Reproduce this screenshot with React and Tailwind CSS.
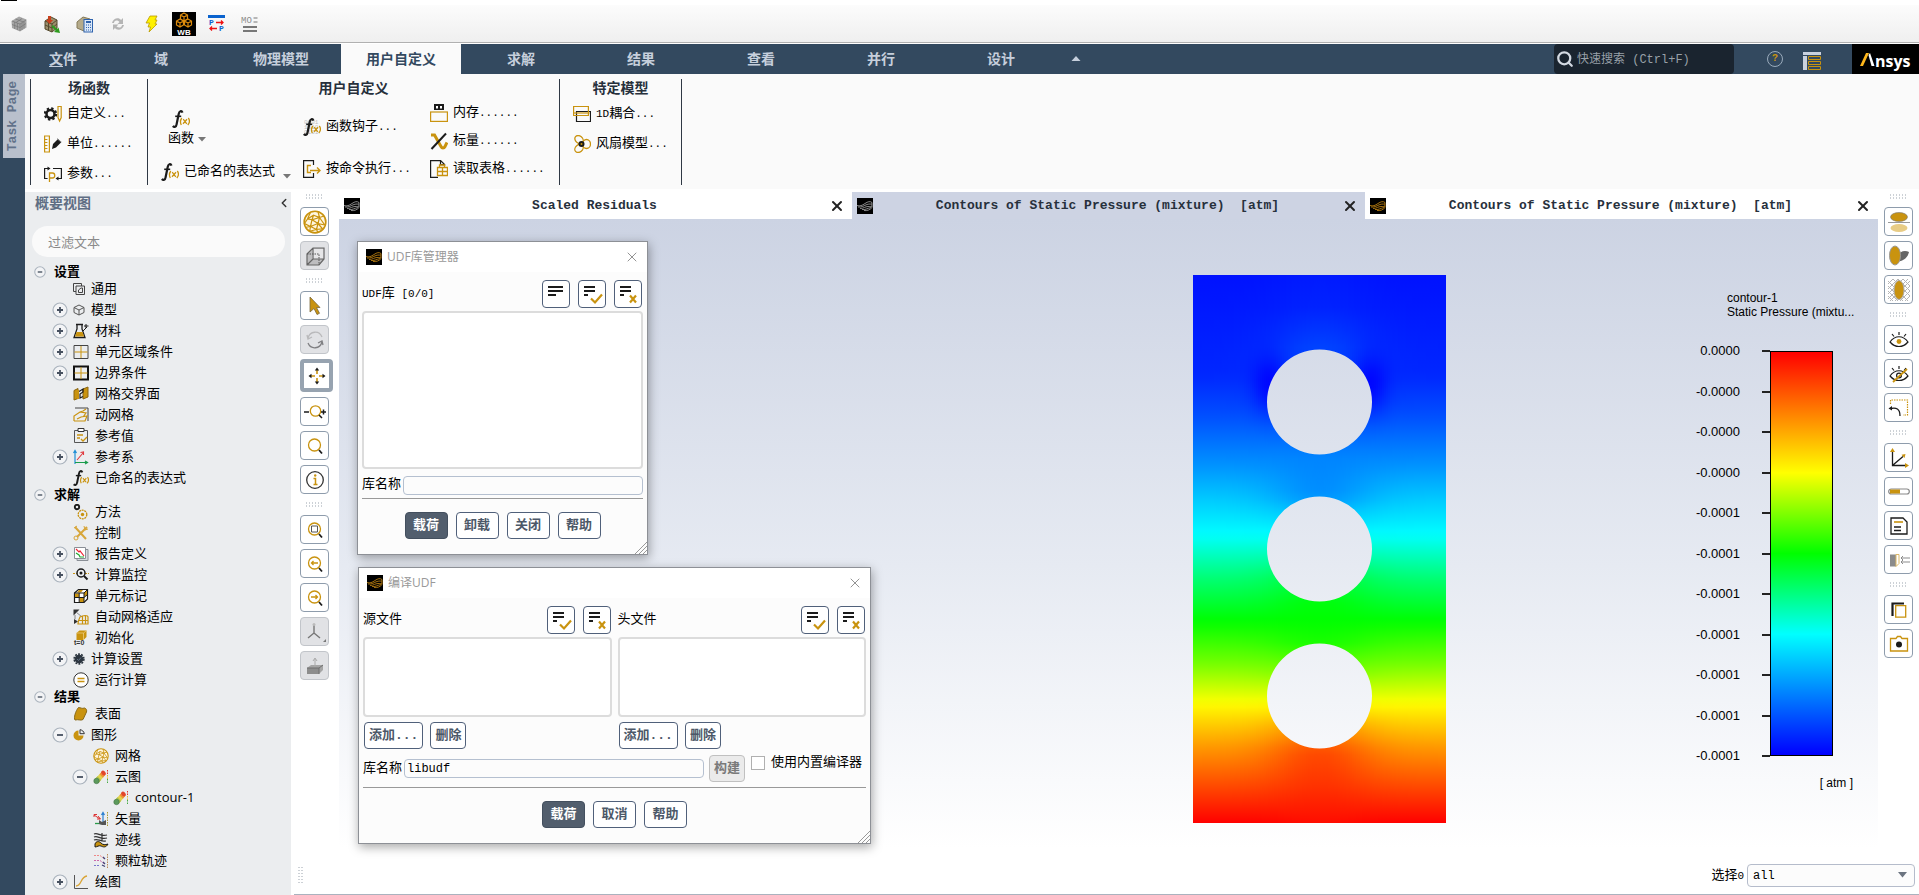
import { ChevronLeft, X, Search } from 'lucide-react';

const GOLD = '#c9930f';
const INK = '#1b1b1b';

// ─── Small helpers ────────────────────────────────────────────────────────────
// Latin runs sit at half the width of a Chinese character
function Mixed({ children }) {
  return children.split(/([\x20-\x7e]+)/).map((run, i) =>
    i % 2 ? <span key={i} className="text-[11px] whitespace-pre">{run}</span> : run
  );
}

function Svg({ size = 16, box = 16, children }) {
  return (
    <svg width={size} height={size} viewBox={`0 0 ${box} ${box}`} fill="none" className="shrink-0" aria-hidden="true">
      {children}
    </svg>
  );
}

const FxPaths = () => (
  <>
    <path d="M10.500 2.600C9.500.2 7.300.8 6.700 4L4.600 14.300C4.200 16.800 2.300 17.600.8 16" stroke={INK} strokeWidth="2.200" />
    <path d="M3.200 6.300h6" stroke={INK} strokeWidth="1.600" />
    <path d="M9.800 8c-1.500 2-1.500 5-.500 7M16.300 8c1.500 2 1.200 5-.500 7M11.200 9.200l3.600 4.600M15 9.200l-4 4.600" stroke={GOLD} strokeWidth="1.300" />
  </>
);

function Fx({ size = 18 }) {
  return <Svg size={size} box={18}><FxPaths /></Svg>;
}

function Swirl({ color, size = 16 }) {
  return (
    <Svg size={size}>
      <rect width="16" height="16" fill="#000" />
      <path
        d="M0 7.500c3 1 5 0 8-2s5-2.500 7-1M1 9c4 .5 6-1.500 9-2.500s4 0 5-.500M3 10.500c4 0 5-2 8-2s3 0 4-.500M5 11.500c3 .5 5-1 9-2M7 12.500c3 .5 6-.500 8-3M15 4.500v5"
        stroke={color}
        strokeWidth=".9"
      />
    </Svg>
  );
}

// ─── Toolbar icons ────────────────────────────────────────────────────────────
const TOOLBAR = [
  {
    label: '网格',
    icon: (
      <Svg>
        <path d="M.500 5L8 .5l7.500 3v8l-6.500 4-8-3.500z" fill="#a5a5a5" />
        <path d="M1 5l8 3 6-4M9 8v7M1 8.500l8 3 6-4M3.700 6v7M6.400 7v7M11 7v7M13 5.500v7M4.500 3l8 3M11 2.500L5 6.500" stroke="#757575" strokeWidth=".7" />
      </Svg>
    ),
  },
  {
    label: '读取',
    icon: (
      <Svg size={18} box={18}>
        <path d="M2 6l6-4 6 3v8l-5 4-7-3z" fill="#9c8f6c" stroke="#54492d" />
        <path d="M2 6l7 3 5-4M9 9v8M5.500 7.500v8M2 10l7 3 5-4" stroke="#54492d" />
        <path d="M5 1h3v4h2L6.500 9 3 5h2z" fill="#c8401c" />
        <path d="M10 10l4 4 1.500-1.500L17 18l-6-1 1.500-1.500-4-4z" fill="#2f9b1f" />
      </Svg>
    ),
  },
  {
    label: '计算',
    icon: (
      <Svg size={18} box={18}>
        <path d="M1 7l6-5 7 2v8l-6 4-7-3z" fill="#b5ab8b" stroke="#857a58" />
        <rect x="8" y="4.500" width="8.500" height="12.500" fill="#dbe8f8" stroke="#2f63ad" />
        <path d="M10 7h5" stroke="#2f63ad" strokeWidth="2" />
        <path d="M10 10h5M10 12.500h5M10 15h5" stroke="#2f63ad" strokeDasharray="1 1" />
      </Svg>
    ),
  },
  {
    label: '刷新',
    icon: (
      <Svg>
        <path d="M2 7c1-5 7-6 9-3l2-2v6H7.500l2-2C7 3.500 4 4.500 4 7zM14 9c-1 5-7 6-9 3l-2 2V8.500h5.500l-2 2C9 12.500 12 11.500 12 9z" fill="#b5b5b5" />
      </Svg>
    ),
  },
  {
    label: '执行',
    icon: (
      <Svg size={18} box={18}>
        <path d="M8 1h7l-2 4h2l-2 4h2L7 17l1.500-5H6l1.500-4H4z" fill="#fff100" stroke="#b99b00" strokeWidth=".8" />
      </Svg>
    ),
  },
  {
    label: 'Workbench',
    icon: (
      <Svg size={24} box={24}>
        <rect width="24" height="24" fill="#000" />
        <path
          d="M12 1l3.500 2v4L12 9 8.500 7V3zM8.500 3L12 5l3.500-2M12 5v4M8 7l3.500 2v4L8 15l-3.500-2V9zM4.500 9L8 11l3.500-2M8 11v4M16 7l3.500 2v4L16 15l-3.500-2V9zM12.500 9l3.500 2 3.500-2M16 11v4"
          stroke="#dd8b0c"
          strokeWidth="1.200"
        />
        <text x="12" y="22.500" textAnchor="middle" fill="#fff" fontSize="8" fontWeight="700" fontFamily="Liberation Sans">WB</text>
      </Svg>
    ),
  },
  {
    label: '参数',
    icon: (
      <Svg size={18} box={18}>
        <path d="M0 1.500h17" stroke="#0b63ce" strokeWidth="3" />
        <text x="1" y="10" fill="#0b63ce" fontSize="8" fontWeight="700" fontFamily="Liberation Mono">P</text>
        <text x="11" y="16" fill="#0b63ce" fontSize="8" fontWeight="700" fontFamily="Liberation Mono">P</text>
        <path d="M8 7.500h7M13 5.500l2 2-2 2M9 13.500H2M4 11.500l-2 2 2 2" stroke="#e11" strokeWidth="1.300" />
      </Svg>
    ),
  },
  {
    label: '监控',
    icon: (
      <Svg size={18} box={18}>
        <text x="0" y="8" fill="#8a8a8a" fontSize="9" fontFamily="Liberation Mono">MO</text>
        <path d="M12.500 3h4M12.500 7h4" stroke="#777" />
        <path d="M2 12h14M2 16h14" stroke="#777" strokeWidth="2" />
      </Svg>
    ),
  },
];

// ─── Ribbon icons ─────────────────────────────────────────────────────────────
const RIBBON = {
  custom: (
    <Svg size={18} box={18}>
      <circle cx="6.500" cy="9" r="4" stroke={INK} strokeWidth="2.500" />
      <circle cx="6.500" cy="9" r="5.600" stroke={INK} strokeWidth="2.200" strokeDasharray="2.300 2.100" />
      <path d="M14 1.500h3.200v11l-1.600 3.500-1.600-3.500z" stroke={GOLD} strokeWidth="1.200" />
    </Svg>
  ),
  units: (
    <Svg size={18} box={18}>
      <path d="M.6 1h4.800v16H.6zM.6 4.500h2.800M.6 7.500h2.800M.6 10.500h2.800M.6 13.500h2.800" stroke={GOLD} strokeWidth="1.200" />
      <path d="M8 14l1-5 5-5 3.500 3-5.500 5.500z" fill={INK} />
      <path d="M13 3.500l4 3.500" stroke="#888" />
    </Svg>
  ),
  params: (
    <Svg size={18} box={18}>
      <path d="M5 3.500H.6v10h3M9 3.500h8.400v10H13" stroke={INK} strokeWidth="1.200" />
      <path d="M3.500 1.500l3 2-3 2zM14.500 11.500l-3 2 3 2z" fill={INK} />
      <path d="M5.500 17V8H8.500c3 0 3 5 0 5h-3" stroke={GOLD} strokeWidth="1.300" />
    </Svg>
  ),
  hooks: (
    <Svg size={18} box={18}>
      <text x="1" y="6" fontSize="6" fill="#bdbdbd" fontFamily="Liberation Mono">0001</text>
      <text x="1" y="11" fontSize="6" fill="#bdbdbd" fontFamily="Liberation Mono">1010</text>
      <text x="1" y="16" fontSize="6" fill="#bdbdbd" fontFamily="Liberation Mono">0101</text>
      <FxPaths />
    </Svg>
  ),
  execute: (
    <Svg size={18} box={18}>
      <path d="M10.500 5V.6H.6v16.800h9.900V13" stroke={INK} strokeWidth="1.200" />
      <path d="M8 5.500H4.500v7H8M7 10.500h10M14 7.500l3 3-3 3" stroke={GOLD} strokeWidth="1.400" />
    </Svg>
  ),
  memory: (
    <Svg size={18} box={18}>
      <rect x="4" y="0" width="10" height="6" fill={INK} />
      <path d="M6 2h2v2.500H6zM10 2h2v2.500h-2z" fill="#fff" />
      <rect x=".6" y="8" width="16.800" height="9.400" stroke={GOLD} strokeWidth="1.200" />
    </Svg>
  ),
  scalar: (
    <Svg size={18} box={18}>
      <path d="M1 3h3.500L11 14.500c1 2 3 2 4 0l2-4" stroke={GOLD} strokeWidth="3" />
      <path d="M1.500 17L16 1.500" stroke={INK} strokeWidth="2" />
    </Svg>
  ),
  table: (
    <Svg size={18} box={18}>
      <path d="M8 17.400H.6V.6h10l4 4V6M10.500.6v4h4" stroke={INK} strokeWidth="1.200" />
      <path d="M7.500 7.500h10v8h-10zM7.500 11.500h10M12.500 7.500v8M9.500 7V5h5v2" stroke={GOLD} strokeWidth="1.300" />
    </Svg>
  ),
  coupling: (
    <Svg size={18} box={18}>
      <path d="M3.500 6.500h14v10h-14z" stroke={INK} strokeWidth="1.200" />
      <path d="M.6 1.500h14.800v9H.6z" stroke={GOLD} strokeWidth="1.200" />
      <path d="M.6 8h16" stroke={GOLD} strokeWidth="1.200" />
    </Svg>
  ),
  fan: (
    <Svg size={18} box={18}>
      <ellipse cx="6" cy="4.500" rx="4.500" ry="3.600" transform="rotate(40 6 4.500)" stroke={GOLD} strokeWidth="1.300" />
      <ellipse cx="13.500" cy="9" rx="4" ry="4.500" stroke={GOLD} strokeWidth="1.300" />
      <ellipse cx="6" cy="13.500" rx="4.500" ry="3.600" transform="rotate(-40 6 13.500)" stroke={GOLD} strokeWidth="1.300" />
      <circle cx="8.500" cy="9" r="3" fill={INK} />
      <circle cx="8.500" cy="9" r="1" fill={GOLD} />
    </Svg>
  ),
};

// ─── Outline tree icons ───────────────────────────────────────────────────────
const ContourIcon = () => (
  <Svg>
    <path d="M2 10L9 2.500l3.500 3L5.500 14z" fill="#e3d24c" />
    <path d="M6.500 5.200L9 2.500l3.500 3-2.600 3.200z" fill="#ef8f35" />
    <ellipse cx="10.500" cy="4" rx="2.600" ry="2" transform="rotate(40 10.500 4)" fill="#e2452c" />
    <path d="M2 10l2.500-2.700L8 11l-2.500 3z" fill="#a6c048" />
    <circle cx="3.500" cy="12" r="2.700" fill="#5c9a5c" stroke="#47764a" strokeWidth=".6" />
    <path d="M14.500 1v5" stroke="#d33" strokeDasharray="1.500 1" />
    <path d="M14.500 6v4" stroke="#db3" strokeDasharray="1.500 1" />
    <path d="M14.500 10v5" stroke="#4a4" strokeDasharray="1.500 1" />
  </Svg>
);

const MeshBall = ({ size = 16 }) => (
  <Svg size={size}>
    <circle cx="8" cy="8" r="7.200" fill="#fff6e0" stroke={GOLD} strokeWidth="1.100" />
    <path
      d="M5 1.500L3 6l4-2.500L11 5l-1-4M3 6L1 9l4 2 1-4.500zM7 3.500L6 6.500l5-1.500 3-1M11 5l-1 4 4.500 1M11 5l3.500 5M6 6.500L10 9l-5 2M10 9l-1 4-4-2-.500 3M10 9l3 3.500L9 13l1 2M5 11l-3 .500M9 13l-4 1"
      stroke={GOLD}
      strokeWidth=".8"
    />
  </Svg>
);

const TREE_ICONS = {
  general: <Svg size={12} box={12}><path d="M3 8.500H.5v-8h8V3M3 3h8.500v8.500H3z" stroke="#444" /><path d="M5.500 9.500V7L8 5h1.500v4.500z" stroke="#444" /></Svg>,
  model: <Svg size={12} box={12}><path d="M6 1l5 2.500v5L6 11 1 8.500v-5zM1 3.500L6 6l5-2.500M6 6v5" stroke="#555" /></Svg>,
  material: <Svg><path d="M4 1v5L1 14.500h11L9 6V1M3 1.500h7" stroke={INK} strokeWidth="1.300" /><path d="M3.500 9h6l1.700 4.500H2z" fill={GOLD} /><path d="M10 8l4-4M13 1v4M11 3h4.500" stroke={INK} /></Svg>,
  cellzone: <Svg><path d="M1 1.500h14v13H1z" stroke="#444" /><path d="M8 2v12M1.500 8h13" stroke={GOLD} /></Svg>,
  boundary: <Svg><path d="M1 1.500h14v13H1z" stroke="#111" strokeWidth="2" /><path d="M8 2v12M1.500 8h13" stroke={GOLD} /></Svg>,
  interface: <Svg><path d="M1 4.500l4-2v10l-4 1.500zM10 3l5-2v10l-5 2z" fill={GOLD} stroke="#8a6410" /><path d="M6 5.500l4-2.500v3l-3 2v4l3-1.500" stroke={INK} strokeWidth="1.200" /><path d="M5 4v9" stroke={GOLD} strokeWidth="2" /></Svg>,
  dynamic: <Svg><path d="M2 1h13v13" stroke="#444" /><path d="M1 14V9l6-4 3-1 3-2M1 14h11l2-5-6 1-4 2M7 5l6 1-3 4" stroke={GOLD} strokeWidth="1.200" /></Svg>,
  reference: <Svg><path d="M1.500 2.500h13v12h-13z" stroke="#555" /><path d="M5 .5h6v3H5z" fill="#fff" stroke="#333" /><path d="M4 7h6M4 10h3M8 11l2 2 4-4" stroke={GOLD} strokeWidth="1.300" /></Svg>,
  frames: <Svg><path d="M2 15V2M.5 4L2 1.500 3.500 4" stroke="#1f8fd6" strokeWidth="1.200" /><path d="M2 13.500h12M12 12l2.500 1.500L12 15" stroke="#1a9c4c" strokeWidth="1.200" /><path d="M4 11l6-7M7.500 3.500L10.500 3v3" stroke="#e0393e" strokeWidth="1.100" /></Svg>,
  fx: <Fx size={16} />,
  methods: <Svg><circle cx="4" cy="3" r="2.200" stroke={INK} strokeWidth="1.900" /><circle cx="9.500" cy="10.500" r="4.300" stroke={GOLD} strokeWidth="1.300" strokeDasharray="2 .7" /><circle cx="9.500" cy="10.500" r="1.700" fill={GOLD} /></Svg>,
  controls: <Svg><path d="M2 2l11 12M14 2L4 12" stroke="#d7a63a" strokeWidth="2" /><circle cx="3" cy="13" r="2" stroke="#d7a63a" /><path d="M11 1l1 4 3-1M1 3l3-2" stroke="#d7a63a" /></Svg>,
  report: <Svg><path d="M4 3.500h11v11H4z" fill="#d7dbe0" stroke="#8a8f96" /><path d="M1.500 1.500h11v11h-11z" fill="#fff" stroke="#8a8f96" /><path d="M3 3l3 3 1-1 4 5" stroke="#e23" strokeWidth="1.200" /><path d="M3 7l3 2 1 2 4 0" stroke="#2a3" strokeWidth="1.200" /></Svg>,
  monitor: <Svg><path d="M0 6.500h16" stroke={GOLD} strokeDasharray="2 1" /><circle cx="8" cy="6" r="4" fill="#eceef0" stroke={INK} strokeWidth="1.500" /><circle cx="8" cy="6" r="1.500" fill={INK} /><path d="M11 9l3.500 3.500" stroke={INK} strokeWidth="2" /></Svg>,
  register: <Svg><path d="M1.500 5l4-3.500h9V11L11 14.500H1.500z" fill="#fff" stroke={INK} strokeWidth="1.200" /><path d="M2 5.500h4v4H2zM6.500 9.500H11V14H6.500zM11 5l3-3v5l-3 2zM6 2h4L8 4.500H4z" fill={GOLD} /><path d="M1.500 5H11v9.500M11 5l3.500-3.500M6.200 5v9.500M1.500 9.500H11l3.500-3" stroke={INK} /></Svg>,
  adapt: <Svg><path d="M.5.5h6L.5 6.500zM1 10l4 2.500L1 15z" fill="#333" /><path d="M3 3l6 5M2 6v4" stroke="#888" /><path d="M7 8c3-2 8-2 8 0v7H5c0-2 1-5 2-7zM6 11.500h9M9.500 7v8M12.500 7v8" stroke={GOLD} strokeWidth="1.200" /></Svg>,
  init: <Svg><path d="M3.500 3l3-2.500h7V7l-3 3h-7z" fill={GOLD} /><path d="M3.500 3h7v7M10.500 3l3-2.500" stroke="#f1d48c" strokeWidth=".7" /><text x="1" y="14.500" fontSize="7" fontWeight="700" fill="#333" fontFamily="Liberation Sans">t=0</text></Svg>,
  calcset: <Svg size={12} box={12}><circle cx="6" cy="6" r="4.300" fill="#2c353f" /><circle cx="6" cy="6" r="4.900" stroke="#2c353f" strokeWidth="1.600" strokeDasharray="1.900 1.180" /><path d="M4 6l1.500 1.500L8 4.500" stroke="#627385" /></Svg>,
  run: <Svg><circle cx="8" cy="8" r="7.200" fill="#fff" stroke="#333" /><path d="M4.500 6.500h7M4.500 9.500h7" stroke={GOLD} strokeWidth="1.300" /></Svg>,
  surface: <Svg><path d="M5.500 1.500c2 0 3.500 1.500 6 .500 2 .500 2.500 2.500 2 4l-3.500 7.500c-2.500 1.500-4-.500-8 .500C.5 12 2.500 5 5.500 1.500z" fill={GOLD} stroke="#8a6a18" /></Svg>,
  graphics: <Svg size={12} box={12}><path d="M5.500 1.500a5 5 0 1 0 5 5h-5z" fill={GOLD} /><path d="M7 .7v4h4.300C11 2.500 9 .9 7 .7z" stroke="#333" /></Svg>,
  mesh: <MeshBall />,
  contour: <ContourIcon />,
  vector: <Svg><path d="M1 4l6 4M1 6V3.500h3M5 5l2.500 3H4" stroke="#d33" /><path d="M2 12.500h6" stroke="#2a9b4a" strokeWidth="1.300" /><path d="M10 12V2M8.500 4L10 1.500 11.500 4" stroke="#2b7fd0" strokeWidth="1.200" /><path d="M6 13V9l3 2 4-2v5H9z" fill="#555" /><path d="M14.500 1v14" stroke="#a93" strokeDasharray="1.500 1" /></Svg>,
  path: <Svg><path d="M1 2c4-2 6 3 13 1M1 5c4-2 6 3 13 1M1 8c4-2 6 2 12 1M9 1v8" stroke="#333" strokeWidth="1.200" /><path d="M2 12c1-3 4-3 6-1s4 2 7 1c-2 4-5 3-7 2s-4 1-6 1z" fill={GOLD} stroke={INK} /></Svg>,
  particle: <Svg><path d="M1 2.500h6l4 3" stroke="#e88" strokeDasharray="2 1" /><path d="M1 7.500h6l4 3" stroke="#c6a" strokeDasharray="2 1" /><path d="M1 12.500h6" stroke="#77c" strokeDasharray="2 1" /><path d="M9 12l3 1.500M10 4l2 2M10 9l2 2" stroke="#447" strokeWidth="1.300" /><path d="M14.500 1v14" stroke="#b85" strokeDasharray="1.500 1" /></Svg>,
  plot: <Svg><path d="M1.500 1v13.500H15" stroke="#555" /><path d="M3 12c6 0 4-9 11-10" stroke="#d9a435" strokeWidth="1.300" /></Svg>,
};

const TREE = [
  { depth: 0, label: '设置', toggle: '-' },
  { depth: 1, label: '通用', icon: 'general' },
  { depth: 1, label: '模型', icon: 'model', toggle: '+' },
  { depth: 1, label: '材料', icon: 'material', toggle: '+' },
  { depth: 1, label: '单元区域条件', icon: 'cellzone', toggle: '+' },
  { depth: 1, label: '边界条件', icon: 'boundary', toggle: '+' },
  { depth: 1, label: '网格交界面', icon: 'interface' },
  { depth: 1, label: '动网格', icon: 'dynamic' },
  { depth: 1, label: '参考值', icon: 'reference' },
  { depth: 1, label: '参考系', icon: 'frames', toggle: '+' },
  { depth: 1, label: '已命名的表达式', icon: 'fx' },
  { depth: 0, label: '求解', toggle: '-' },
  { depth: 1, label: '方法', icon: 'methods' },
  { depth: 1, label: '控制', icon: 'controls' },
  { depth: 1, label: '报告定义', icon: 'report', toggle: '+' },
  { depth: 1, label: '计算监控', icon: 'monitor', toggle: '+' },
  { depth: 1, label: '单元标记', icon: 'register' },
  { depth: 1, label: '自动网格适应', icon: 'adapt' },
  { depth: 1, label: '初始化', icon: 'init' },
  { depth: 1, label: '计算设置', icon: 'calcset', toggle: '+' },
  { depth: 1, label: '运行计算', icon: 'run' },
  { depth: 0, label: '结果', toggle: '-' },
  { depth: 1, label: '表面', icon: 'surface' },
  { depth: 1, label: '图形', icon: 'graphics', toggle: '-' },
  { depth: 2, label: '网格', icon: 'mesh' },
  { depth: 2, label: '云图', icon: 'contour', toggle: '-' },
  { depth: 3, label: 'contour-1', icon: 'contour' },
  { depth: 2, label: '矢量', icon: 'vector' },
  { depth: 2, label: '迹线', icon: 'path' },
  { depth: 2, label: '颗粒轨迹', icon: 'particle' },
  { depth: 1, label: '绘图', icon: 'plot', toggle: '+' },
];

const DEPTH_PAD = ['pl-[9px]', 'pl-[27px]', 'pl-[47px]', 'pl-[67px]'];

function Toggle({ sign, small }) {
  return (
    <button aria-label={sign === '+' ? '展开' : '折叠'} className="block">
      <Svg size={small ? 12 : 16}>
        <circle cx="8" cy="8" r="7" fill="#f3f4f6" stroke="#aab3bd" strokeWidth={small ? 1.4 : 1.2} />
        <path d={sign === '+' ? 'M5 8h6M8 5v6' : 'M5 8h6'} stroke="#46505f" strokeWidth="1.800" />
      </Svg>
    </button>
  );
}

function TreeRow({ row }) {
  if (row.depth === 0) {
    return (
      <li className="flex h-[13px] items-center gap-2 pl-[9px]">
        <Toggle sign={row.toggle} small />
        <span className="text-[13px] leading-none font-bold text-black">{row.label}</span>
      </li>
    );
  }
  return (
    <li className={`flex h-[21px] items-center ${DEPTH_PAD[row.depth]}`}>
      <span className="mr-[5px] w-4">{row.toggle && <Toggle sign={row.toggle} />}</span>
      {TREE_ICONS[row.icon]}
      <span className="ml-1.5 text-[13px] leading-none whitespace-nowrap text-black">{row.label}</span>
    </li>
  );
}

function Outline() {
  return (
    <aside className="mt-[3px] w-[266px] shrink-0 overflow-hidden bg-[#ebedef]">
      <div className="flex h-[22px] items-center justify-between pl-2.5">
        <h2 className="text-sm leading-none font-bold text-[#5f6e84]">概要视图</h2>
        <button aria-label="收起"><ChevronLeft size={14} strokeWidth={2.5} className="text-[#333]" /></button>
      </div>
      <input
        aria-label="过滤文本"
        placeholder="过滤文本"
        className="mt-3 ml-[7px] block h-[31px] w-[253px] rounded-full bg-[#fafafa] px-4 text-[13px] outline-none placeholder:text-[#8a8a8a]"
      />
      <ul className="mt-2">
        {TREE.map(row => <TreeRow key={`${row.depth}${row.label}`} row={row} />)}
      </ul>
    </aside>
  );
}

// ─── View toolbars ────────────────────────────────────────────────────────────
const Lens = ({ children }) => (
  <>
    <circle cx="10.500" cy="10" r="6" stroke={GOLD} strokeWidth="1.300" />
    <path d="M15 15l3 3.500" stroke={INK} strokeWidth="1.800" />
    {children}
  </>
);

const Eye = () => (
  <>
    <path d="M2 13c5-7 13-7 18 0-5 6-13 6-18 0z" stroke={INK} strokeWidth="1.200" />
    <path d="M11 3v3M4 5l2 2.500M18 5l-2 2.500" stroke={INK} strokeWidth="1.200" />
  </>
);

const LEFT_TOOLS = [
  [
    { label: '网格显示', icon: <MeshBall size={24} /> },
    { label: '透视', off: true, draw: <><path d="M3 9l6-6h11v11l-5 6H3z" fill="#bdbdbf" /><path d="M8 4h12v10H8z" fill="#e6e6e8" /><path d="M3 9l6-6h11v11l-5 6H3zM9 3v11h11M9 14l-6 6" stroke="#666" strokeWidth="1.200" /><path d="M3 9h12v11" stroke="#555" strokeDasharray="1.500 1" /></> },
  ],
  [
    { label: '选择', draw: <path d="M6 2v15l4-3.500 3 6 2.500-1.200-3-5.800H16z" fill={GOLD} stroke="#7b6a3c" strokeWidth=".8" /> },
    { label: '旋转', off: true, draw: <><path d="M4 9c2-7 11-8 14-1M3 6l1 4 4-2" stroke="#b9b9bb" strokeWidth="1.300" /><path d="M18 13c-2 7-11 8-14 1M19 16l-1-4-4 2" stroke="#7f7f82" strokeWidth="1.300" /></> },
    { label: '平移', active: true, draw: <><path d="M11 5v4M11 13v4M5 11h4M13 11h4" stroke={GOLD} strokeWidth="1.600" /><path d="M11 2.500l2.200 3h-4.400zM11 19.500l2.200-3h-4.400zM2.500 11l3-2.200v4.400zM19.500 11l-3-2.200v4.400z" fill={INK} /></> },
    { label: '缩放', draw: <><circle cx="11.500" cy="10" r="5.200" stroke={GOLD} strokeWidth="1.300" /><path d="M15 14l3 3M0 11h5M17 11h5M19.500 8.500v5" stroke={INK} strokeWidth="1.500" /></> },
    { label: '放大', draw: <Lens /> },
    { label: '信息', draw: <><circle cx="11" cy="11" r="8.300" stroke="#333" strokeWidth="1.300" /><path d="M9.500 9.500h2V15M9.500 15.500h4" stroke={GOLD} strokeWidth="1.500" /><circle cx="11.200" cy="6.500" r="1.200" fill={GOLD} /></> },
  ],
  [
    { label: '适合窗口', draw: <Lens><path d="M7.500 7h6v6h-6z" stroke="#555" /></Lens> },
    { label: '上一视图', draw: <Lens><path d="M14 10H7.500M9.500 8l-2 2 2 2" stroke={GOLD} strokeWidth="1.300" /></Lens> },
    { label: '下一视图', draw: <Lens><path d="M7 10h6.500M11.500 8l2 2-2 2" stroke={GOLD} strokeWidth="1.300" /></Lens> },
    { label: '坐标轴', off: true, draw: <><path d="M10 4v8l-6 5M10 12l6 5" stroke="#777" strokeWidth="1.400" /><circle cx="10" cy="3.500" r="1.500" fill="#bbb" /><path d="M22 18v3h-3z" fill="#777" /></> },
    { label: '面投影', off: true, draw: <><path d="M3 13l4-3h12v5l-4 4H3z" fill="#a5a5a5" /><path d="M3 13h12v6H3z" fill="#8d8d8d" /><path d="M3 13h12l4-3M15 13v6" stroke="#6f6f6f" /><path d="M11 12V4M9 6l2-3 2 3" stroke="#aaa" /></> },
  ],
];

const RIGHT_TOOLS = [
  [
    { label: '镜像', draw: <><ellipse cx="11" cy="6" rx="8.500" ry="4.500" fill={GOLD} stroke="#777" strokeWidth=".6" /><path d="M0 11.500h22" stroke="#999" /><ellipse cx="11" cy="17" rx="8.500" ry="4" fill="#e8cc85" /></> },
    { label: '阴影', draw: <><path d="M9 12c2-6 8-7 12-5-1 5-6 10-11 9z" fill="#666" /><ellipse cx="7" cy="10.500" rx="5.500" ry="9.500" fill={GOLD} stroke="#999" /></> },
    { label: '透明', draw: <><path d="M0 5l5-5M0 10L10 0M0 15L15 0M0 20L20 0M2 22L22 2M7 22L22 7M12 22l10-10M17 22l5-5M0 17l5 5M0 12l10 10M0 7l15 15M0 2l20 20M5 0l17 17M10 0l12 12M15 0l7 7" stroke="#b5b5b5" /><ellipse cx="11" cy="11" rx="5" ry="9.500" fill={GOLD} stroke="#aaa" /></> },
  ],
  [
    { label: '显示', draw: <><Eye /><circle cx="11" cy="12.500" r="2.400" fill={GOLD} /></> },
    { label: '隐藏', draw: <><Eye /><circle cx="11" cy="12.500" r="2.400" stroke={INK} strokeWidth="1.200" /><path d="M5 19L19 6" stroke={GOLD} strokeWidth="1.800" /></> },
    { label: '框选', draw: <><path d="M2.500 7V3h17v15H15" stroke={GOLD} strokeWidth="1.200" strokeDasharray="1.500 1" /><path d="M3 11.500c5-1 9 0 9 7.500" stroke={INK} strokeWidth="1.300" /><path d="M.5 11.500L4 9v4.500z" fill={INK} /></> },
  ],
  [
    { label: '坐标', draw: <><path d="M4.500 3v15.500H19M5 18L15 9.500" stroke={INK} strokeWidth="1.300" /><path d="M4.500 1L7 5H2zM21 18.500l-4-2.500v5zM17.500 7l-1 4-3-3.300z" fill={GOLD} /></> },
    { label: '色标', draw: <><rect x=".7" y="8" width="20.600" height="5" rx="2.500" fill="#fff" stroke="#888" strokeWidth="1.200" /><path d="M2 10.500h10" stroke={GOLD} strokeWidth="4" /></> },
    { label: '标题', draw: <><path d="M3 3h12l4 4v12H3z" stroke={INK} strokeWidth="1.300" /><path d="M6 7h9" stroke={GOLD} strokeWidth="1.600" /><path d="M6 12h7M6 15.500h7" stroke={INK} strokeWidth="1.300" /></> },
    { label: '边界', draw: <><path d="M2 5.500h6v12H2z" fill="#8b8b8b" /><path d="M8 5.500h3v9l-3 3z" fill="#fff" stroke="#dcb765" /><path d="M13 9h9M13 13h9M15 7l-2 2 2 2M15 11l-2 2 2 2" stroke="#8b8b8b" /></> },
  ],
  [
    { label: '复制', draw: <><path d="M4.500 17V4.500H16" stroke={INK} strokeWidth="2.200" /><path d="M7.700 6.700h10v11.500h-10z" stroke={GOLD} strokeWidth="1.300" /></> },
    { label: '截图', draw: <><path d="M2.500 5.500H8l1.500-2h3l1.500 2h5.500V18h-17z" stroke={GOLD} strokeWidth="1.300" /><circle cx="11" cy="11.500" r="3" fill={INK} /></> },
  ],
];

function Grip() {
  return (
    <div className="flex h-[5px] w-[29px] justify-center">
      <Svg size={17} box={17}>
        <path d="M0 1h17M0 4h17" stroke="#9aa3ad" strokeDasharray="1 2" />
      </Svg>
    </div>
  );
}

function ToolButton({ tool }) {
  const state = tool.active
    ? 'size-[33px] border-4 border-[#97a3b0] bg-white'
    : tool.off
      ? 'size-[29px] border border-[#c2c5ca] bg-[#e1e2e5]'
      : 'size-[29px] border border-[#8e9cac] bg-white';
  return (
    <button title={tool.label} aria-label={tool.label} className={`flex items-center justify-center rounded ${state}`}>
      {tool.icon ?? <Svg size={22} box={22}>{tool.draw}</Svg>}
    </button>
  );
}

function ToolColumn({ groups }) {
  return (
    <div className="flex flex-col gap-2 pt-[5px] pl-1.5">
      {groups.map((group, i) => (
        <div key={i} className="flex flex-col gap-2">
          <Grip />
          <div className="flex flex-col gap-[5px]">
            {group.map(tool => <ToolButton key={tool.label} tool={tool} />)}
          </div>
        </div>
      ))}
    </div>
  );
}

// ─── Header ───────────────────────────────────────────────────────────────────
const MENU = ['域', '物理模型', '用户自定义', '求解', '结果', '查看', '并行', '设计'];

function MenuBar() {
  return (
    <nav className="flex h-[30px] shrink-0 items-stretch bg-[#33495f] pl-[25px] text-sm font-bold text-[#c6cfdc]">
      <button className="w-[76px] pt-0.5"><span className="underline underline-offset-2">文</span>件</button>
      {MENU.map(item => (
        <button key={item} className={`w-[120px] pt-0.5 ${item === '用户自定义' ? 'bg-[#fafafa] text-[#33495f]' : ''}`}>
          {item}
        </button>
      ))}
      <button aria-label="折叠功能区" className="px-2.5">
        <Svg size={10} box={10}><path d="M5 2l4.500 5h-9z" fill="#c6cfdc" /></Svg>
      </button>
      <label className="ml-auto flex w-[180px] items-center gap-[3px] rounded bg-[#1a242f] pl-0.5 font-normal">
        <Search size={18} strokeWidth={3} className="shrink-0 text-[#d3d9e2]" />
        <input
          aria-label="快速搜索"
          placeholder="快速搜索 (Ctrl+F)"
          className="w-full min-w-0 bg-transparent pt-[3px] text-[12px] outline-none placeholder:text-[#98a0a8]"
        />
      </label>
      <button aria-label="帮助" className="ml-[33px] text-[10px]">
        <span className="flex size-4 items-center justify-center rounded-full border border-[#9aabbc] text-[#c9930f]">?</span>
      </button>
      <button aria-label="布局" className="ml-5 pt-1">
        <Svg size={18} box={18}>
          <path d="M0 1.500h18" stroke="#c9d1de" strokeWidth="3" />
          <path d="M2 4v14" stroke="#c9d1de" strokeWidth="4" />
          <path d="M5.500 4.500h12v3h-12zM5.500 9.500h12v3h-12zM5.500 14.500h12v3h-12z" stroke={GOLD} />
        </Svg>
      </button>
      <div aria-label="Ansys" className="ml-[31px] flex w-[67px] items-center bg-black pl-2 text-white">
        <svg width="15" height="13" viewBox="0 0 15 13" aria-hidden="true">
          <path d="M0 13L6 0h3L3 13z" fill="#ffb71b" />
          <path d="M8.500 2L10 0l4.500 13h-3z" fill="#fff" />
        </svg>
        <span className="pt-1 font-['Open_Sans',sans-serif] text-base leading-none">nsys</span>
      </div>
    </nav>
  );
}

function RibbonButton({ icon, children }) {
  return (
    <button className="flex h-4 items-center gap-[5px] whitespace-nowrap">
      {icon}
      <span><Mixed>{children}</Mixed></span>
    </button>
  );
}

const Caret = () => <Svg size={8} box={8}><path d="M0 2h8L4 6.500z" fill="#777" /></Svg>;

function RibbonGroup({ title, className, children }) {
  return (
    <section className={`h-[106px] border-r border-[#2f3844] ${className}`}>
      <h3 className="text-center text-sm leading-5 font-bold text-[#27303c]">{title}</h3>
      {children}
    </section>
  );
}

function Ribbon() {
  return (
    <div className="flex h-[115px] shrink-0 bg-[#fafafa] pt-[5px] pl-[5px] text-[13px] leading-4 text-black">
      <RibbonGroup title="场函数" className="w-[118px] border-l">
        <div className="flex flex-col gap-3.5 pt-[7px] pl-[13px]">
          <RibbonButton icon={RIBBON.custom}>自定义...</RibbonButton>
          <RibbonButton icon={RIBBON.units}>单位......</RibbonButton>
          <RibbonButton icon={RIBBON.params}>参数...</RibbonButton>
        </div>
      </RibbonGroup>
      <RibbonGroup title="用户自定义" className="w-[412px]">
        <div className="flex pl-[13px]">
          <div className="flex w-[142px] flex-col items-start gap-[17px] pt-[11px]">
            <button className="ml-[7px] flex flex-col items-start gap-[3px]">
              <span className="pl-1"><Fx /></span>
              <span className="flex items-center gap-1">函数 <Caret /></span>
            </button>
            <div className="flex items-end gap-2">
              <RibbonButton icon={<Fx />}>已命名的表达式</RibbonButton>
              <Caret />
            </div>
          </div>
          <div className="flex w-[127px] flex-col items-start gap-[26px] pt-5">
            <RibbonButton icon={RIBBON.hooks}>函数钩子...</RibbonButton>
            <RibbonButton icon={RIBBON.execute}>按命令执行...</RibbonButton>
          </div>
          <div className="flex flex-col items-start gap-3 pt-1.5">
            <RibbonButton icon={RIBBON.memory}>内存......</RibbonButton>
            <RibbonButton icon={RIBBON.scalar}>标量......</RibbonButton>
            <RibbonButton icon={RIBBON.table}>读取表格......</RibbonButton>
          </div>
        </div>
      </RibbonGroup>
      <RibbonGroup title="特定模型" className="w-[122px]">
        <div className="flex flex-col gap-3.5 pt-[7px] pl-[13px]">
          <RibbonButton icon={RIBBON.coupling}>1D耦合...</RibbonButton>
          <RibbonButton icon={RIBBON.fan}>风扇模型...</RibbonButton>
        </div>
      </RibbonGroup>
    </div>
  );
}

// ─── Pressure field ───────────────────────────────────────────────────────────
const PLOT_W = 253;
const PLOT_H = 548;
const HOLES = [127, 274, 421];
const STRIP = 2;
const STRIPS = 64;

// [y, value] down the outer wall and down the centre line
const WALL = [[0, .02], [100, .045], [139, .09], [189, .17], [223, .235], [260, .3], [304, .41], [346, .5], [388, .59], [428, .7], [472, .82], [510, .91], [548, 1]];
const CENTRE = [[0, .03], [32, .04], [74, .08], [127, .07], [181, .155], [221, .17], [248, .26], [274, .35], [300, .45], [327, .49], [346, .5], [368, .52], [400, .6], [428, .7], [450, .82], [476, .91], [510, .94], [548, .985]];
const COLOURS = [[0, [0, 0, 255]], [.3, [0, 255, 255]], [.5, [0, 255, 0]], [.7, [255, 255, 0]], [1, [255, 0, 0]]];

function lookup(table, x) {
  const i = Math.max(1, table.findIndex(([at]) => at >= x));
  const [x0, a] = table[i - 1];
  const [x1, b] = table[i];
  return { a, b, t: (x - x0) / (x1 - x0) };
}

function sample(table, y) {
  const { a, b, t } = lookup(table, y);
  return a + (b - a) * t;
}

function colour(v) {
  const { a, b, t } = lookup(COLOURS, Math.min(1, Math.max(0, v)));
  return `rgb(${a.map((c, i) => Math.round(c + (b[i] - c) * t)).join(',')})`;
}

function pressure(dx, y) {
  const w = Math.exp(-((dx / 52) ** 2));
  const low = 0.055 * Math.exp(-(((dx - 50) / 17) ** 2) - ((y - 112) / 28) ** 2);
  return sample(WALL, y) * (1 - w) + sample(CENTRE, y) * w - low;
}

function ContourPlot() {
  const mid = PLOT_W / 2;
  const holes = HOLES.map(y => `M${mid - 52.5} ${y}a52.5 52.5 0 1 0 105 0a52.5 52.5 0 1 0 -105 0z`).join('');
  const stops = Array.from({ length: 69 }, (_, i) => i * 8).filter(y => y < PLOT_H).concat(PLOT_H);
  return (
    <svg width={PLOT_W} height={PLOT_H} className="absolute top-14 left-[854px]" role="img" aria-label="contour-1">
      <defs>
        <clipPath id="domain">
          <path d={`M0 0h${PLOT_W}v${PLOT_H}H0z${holes}`} clipRule="evenodd" />
        </clipPath>
        {Array.from({ length: STRIPS }, (_, i) => (
          <linearGradient key={i} id={`strip${i}`} x1="0" y1="0" x2="0" y2="1">
            {stops.map(y => (
              <stop key={y} offset={y / PLOT_H} stopColor={colour(pressure(i * STRIP + 1, y))} />
            ))}
          </linearGradient>
        ))}
      </defs>
      <g clipPath="url(#domain)" shapeRendering="crispEdges">
        {Array.from({ length: STRIPS }, (_, i) => (
          <g key={i} fill={`url(#strip${i})`}>
            <rect x={127 + i * STRIP} y="0" width={STRIP} height={PLOT_H} />
            <rect x={125 - i * STRIP} y="0" width={STRIP} height={PLOT_H} />
          </g>
        ))}
      </g>
    </svg>
  );
}

const LEVELS = ['0.0000', '-0.0000', '-0.0000', '-0.0000', '-0.0001', '-0.0001', '-0.0001', '-0.0001', '-0.0001', '-0.0001', '-0.0001'];

function Legend() {
  return (
    <div className="absolute top-[72px] right-[25px] w-[158px] font-['Liberation_Sans',sans-serif] text-black">
      <div className="pl-8 text-[12px] leading-3.5 whitespace-nowrap">
        <div>contour-1</div>
        <div>Static Pressure (mixtu...</div>
      </div>
      <div className="mt-[25px] flex">
        <ul className="flex w-[45px] flex-col justify-between text-right text-[13px] leading-3.5">
          {LEVELS.map((level, i) => <li key={i}>{level}</li>)}
        </ul>
        <div className="my-[7px] ml-[22px] flex h-[405px] w-2 flex-col justify-between">
          {LEVELS.map((_, i) => <i key={i} className="-my-px block h-0.5 bg-[#222]" />)}
        </div>
        <div className="my-[7px] w-[63px] border border-black bg-[linear-gradient(#f00,#ff0_30%,#0f0_50%,#0ff_70%,#00f)]" />
      </div>
      <div className="mt-2.5 text-right text-[12px] leading-5 whitespace-pre">[ atm ]</div>
    </div>
  );
}

// ─── Dialogs ──────────────────────────────────────────────────────────────────
const LIST_BADGES = {
  all: { label: '列表', draw: null },
  check: { label: '全选', draw: 'M12 17.500l4 4 7-8' },
  clear: { label: '取消全选', draw: 'M15 14.500l6 7M21 14.500l-6 7' },
};

function ListButton({ kind }) {
  const badge = LIST_BADGES[kind];
  return (
    <button aria-label={badge.label} className="flex size-7 items-center justify-center rounded border border-[#50607a] bg-white">
      <Svg size={26} box={26}>
        <path d={kind === 'all' ? 'M5 6h15M5 10h15M5 14h8' : 'M5 6h11M5 10h11M5 14h4'} stroke={INK} strokeWidth="1.800" />
        {badge.draw && <path d={badge.draw} stroke={GOLD} strokeWidth="2.200" />}
      </Svg>
    </button>
  );
}

function PushButton({ primary, disabled, wide, children }) {
  const look = primary
    ? 'border-[#434f5e] bg-[#525e6d] text-white'
    : disabled
      ? 'border-[#c0c0c0] bg-[#ebebeb] text-[#7a7a7a]'
      : 'border-[#50607a] bg-white text-[#4c5868]';
  return (
    <button
      disabled={disabled}
      className={`h-[27px] rounded border text-[13px] leading-none font-bold whitespace-nowrap ${wide ? 'w-[43px]' : 'px-1'} ${look}`}
    >
      {children}
    </button>
  );
}

function Dialog({ title, className, children }) {
  return (
    <div role="dialog" aria-label={title} className={`absolute border border-[#8d9096] bg-[#fcfcfc] text-[13px] text-black shadow-[1px_3px_10px_rgba(0,0,0,0.35)] ${className}`}>
      <div className="flex h-[30px] items-center bg-white pr-[7px] pl-2">
        <Swirl color="#b57c10" />
        <span className="ml-[5px] font-['Open_Sans','Noto_Sans_CJK_SC',sans-serif] text-[12px] text-[#999]">{title}</span>
        <button aria-label="关闭" className="ml-auto"><X size={16} strokeWidth={1.2} className="text-[#777]" /></button>
      </div>
      {children}
      <svg width="12" height="12" className="absolute right-0 bottom-0" aria-hidden="true">
        <path d="M0 12L12 0M4 12l8-8M8 12l4-4" stroke="#999" />
      </svg>
    </div>
  );
}

const LISTBOX = 'block w-full resize-none rounded border-2 border-[#dcdcdc] bg-white outline-none';
const FIELD = 'h-[19px] min-w-0 flex-1 rounded border border-[#b5c0d0] bg-[#fcfcfc] px-0.5 text-[12px] outline-none';

function LibraryManager() {
  return (
    <Dialog title="UDF库管理器" className="top-[22px] left-[18px] w-[291px]">
      <div className="px-1 pt-2 pb-[15px]">
        <div className="flex items-center gap-2 pr-px">
          <label htmlFor="udf-list" className="mr-auto"><Mixed>UDF库 [0/0]</Mixed></label>
          <ListButton kind="all" />
          <ListButton kind="check" />
          <ListButton kind="clear" />
        </div>
        <textarea id="udf-list" readOnly className={`mt-[3px] h-[158px] ${LISTBOX}`} />
        <div className="mt-1.5 flex h-5 items-center gap-0.5">
          <label htmlFor="lib-name">库名称</label>
          <input id="lib-name" className={FIELD} />
        </div>
        <hr className="mt-[3px] border-[#999]" />
        <div className="mt-[13px] flex justify-center gap-2">
          <PushButton primary wide>载荷</PushButton>
          <PushButton wide>卸载</PushButton>
          <PushButton wide>关闭</PushButton>
          <PushButton wide>帮助</PushButton>
        </div>
      </div>
    </Dialog>
  );
}

function FileColumn({ id, label }) {
  return (
    <div className="flex-1">
      <div className="flex items-center gap-2 pr-px">
        <label htmlFor={id} className="mr-auto">{label}</label>
        <ListButton kind="check" />
        <ListButton kind="clear" />
      </div>
      <textarea id={id} readOnly className={`mt-[3px] h-20 ${LISTBOX}`} />
      <div className="mt-[5px] flex gap-[7px] pl-px">
        <PushButton>添加...</PushButton>
        <PushButton>删除</PushButton>
      </div>
    </div>
  );
}

function CompileUdf() {
  return (
    <Dialog title="编译UDF" className="top-[348px] left-[19px] w-[513px]">
      <div className="px-1 pt-2 pb-[15px]">
        <div className="flex gap-1.5">
          <FileColumn id="source-files" label="源文件" />
          <FileColumn id="header-files" label="头文件" />
        </div>
        <div className="mt-1.5 flex items-center">
          <label htmlFor="build-name" className="mr-0.5">库名称</label>
          <input id="build-name" defaultValue="libudf" className={FIELD} />
          <span className="mr-1.5 ml-[5px]"><PushButton disabled>构建</PushButton></span>
          <label className="flex items-center gap-1.5 self-start pr-1 leading-4">
            <input type="checkbox" className="size-3.5 appearance-none border border-[#b0b0b0] bg-white" />
            使用内置编译器
          </label>
        </div>
        <hr className="mt-[5px] border-[#999]" />
        <div className="mt-[13px] flex justify-center gap-2">
          <PushButton primary wide>载荷</PushButton>
          <PushButton wide>取消</PushButton>
          <PushButton wide>帮助</PushButton>
        </div>
      </div>
    </Dialog>
  );
}

// ─── Graphics window ──────────────────────────────────────────────────────────
const VIEWS = [
  { id: 1, title: 'Scaled Residuals', color: '#999' },
  { id: 2, title: 'Contours of Static Pressure (mixture)  [atm]', color: '#999', active: true },
  { id: 3, title: 'Contours of Static Pressure (mixture)  [atm]', color: '#b57c10' },
];

function ViewTabs() {
  return (
    <div role="tablist" className="flex h-[30px] shrink-0 bg-white pt-[3px]">
      {VIEWS.map(view => (
        <div key={view.id} className={`flex flex-1 items-center pr-[7px] pl-[5px] ${view.active ? 'bg-[#cdd3e3]' : ''}`}>
          <Swirl color={view.color} />
          <button role="tab" aria-selected={!!view.active} className="flex-1 text-[13px] font-bold whitespace-pre text-[#27303c]">
            {view.title}
          </button>
          <button aria-label="关闭"><X size={16} strokeWidth={3} className="text-[#222]" /></button>
        </div>
      ))}
    </div>
  );
}

function GraphicsArea() {
  return (
    <main className="flex min-w-0 flex-1 flex-col">
      <div className="flex min-h-0 flex-1">
        <div className="w-12 shrink-0 pl-[3px]"><ToolColumn groups={LEFT_TOOLS} /></div>
        <div className="flex min-w-0 flex-1 flex-col">
          <ViewTabs />
          <div className="relative min-h-0 flex-1 bg-[linear-gradient(#ccd3e3,#e6eaf2_55%,#fff)]">
            <ContourPlot />
            <Legend />
            <LibraryManager />
            <CompileUdf />
          </div>
        </div>
        <div className="w-[41px] shrink-0"><ToolColumn groups={RIGHT_TOOLS} /></div>
      </div>
      <div className="ml-[3px] flex h-[46px] shrink-0 items-center border-b border-[#aab2be] pt-2 pr-1 pl-1">
        <svg width="5" height="17" aria-hidden="true">
          <path d="M1 0v17M4 0v17" stroke="#9aa3ad" strokeDasharray="1 2" />
        </svg>
        <label htmlFor="selection" className="mr-[3px] ml-auto text-[13px]"><Mixed>选择0</Mixed></label>
        <div className="relative">
          <select id="selection" className="block h-[23px] w-[168px] appearance-none rounded border border-[#b5bccb] bg-[#fcfcfc] pl-[5px] text-[12px]">
            <option>all</option>
          </select>
          <svg width="9" height="6" className="pointer-events-none absolute top-2 right-2" aria-hidden="true">
            <path d="M0 0h9L4.500 5.500z" fill="#6b7480" />
          </svg>
        </div>
      </div>
    </main>
  );
}

export default function App() {
  return (
    <div className="flex h-screen flex-col overflow-hidden bg-white font-['Liberation_Mono','Noto_Sans_CJK_SC',monospace]">
      <div className="h-[5px] shrink-0 pl-px"><div className="h-px w-4 bg-black" /></div>
      <header className="mb-px flex h-[38px] shrink-0 items-center border-b border-[#b0b0b0] bg-linear-to-b from-[#fcfcfc] to-[#efefef] pl-0.5">
        {TOOLBAR.map(tool => (
          <button key={tool.label} aria-label={tool.label} className="flex w-[33px] justify-center">{tool.icon}</button>
        ))}
      </header>
      <MenuBar />
      <div className="flex min-h-0 flex-1">
        <div className="w-[25px] shrink-0 bg-[#33495f] pl-[3px]">
          <button className="h-[84px] w-full bg-[#b9c0cc] text-[13px] font-bold text-[#62728a]">
            <span className="block rotate-180 [writing-mode:vertical-rl]">Task Page</span>
          </button>
        </div>
        <div className="flex min-w-0 flex-1 flex-col">
          <Ribbon />
          <div className="flex min-h-0 flex-1">
            <div className="flex font-['Open_Sans','Noto_Sans_CJK_SC',sans-serif]"><Outline /></div>
            <GraphicsArea />
          </div>
        </div>
      </div>
    </div>
  );
}
